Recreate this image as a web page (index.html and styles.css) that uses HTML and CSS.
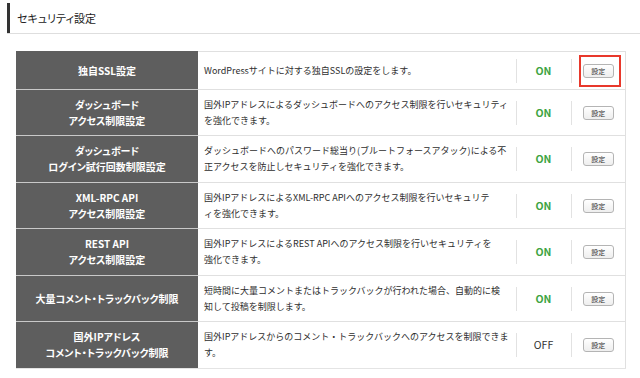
FILE: index.html
```html
<!DOCTYPE html>
<html lang="ja">
<head>
	<meta charset="UTF-8">
	<title>セキュリティ設定</title>
	<link rel="stylesheet" href="styles.css">
</head>
<body>
<main>
	<div class="title-wrap">
		<h1 class="page-title">セキュリティ設定</h1>
	</div>

	<table class="security">
		<colgroup>
			<col class="col-name">
			<col class="col-desc">
			<col class="col-state">
			<col class="col-action">
		</colgroup>
		<tr class="short">
			<th>独自SSL設定</th>
			<td class="desc">WordPressサイトに対する独自SSLの設定をします。</td>
			<td class="state"><div class="sep on">ON</div></td>
			<td class="action"><div class="sep"><span class="btn-wrap"><button type="button" class="btn">設定</button><span class="highlight"></span></span></div></td>
		</tr>
		<tr>
			<th>ダッシュボード<br>アクセス制限設定</th>
			<td class="desc">国外IPアドレスによるダッシュボードへのアクセス制限を行いセキュリティ<br>を強化できます。</td>
			<td class="state"><div class="sep on">ON</div></td>
			<td class="action"><div class="sep"><button type="button" class="btn">設定</button></div></td>
		</tr>
		<tr class="tall">
			<th>ダッシュボード<br>ログイン試行回数制限設定</th>
			<td class="desc">ダッシュボードへのパスワード総当り(ブルートフォースアタック)による不<br>正アクセスを防止しセキュリティを強化できます。</td>
			<td class="state"><div class="sep on">ON</div></td>
			<td class="action"><div class="sep"><button type="button" class="btn">設定</button></div></td>
		</tr>
		<tr>
			<th>XML-RPC API<br>アクセス制限設定</th>
			<td class="desc">国外IPアドレスによるXML-RPC APIへのアクセス制限を行いセキュリテ<br>ィを強化できます。</td>
			<td class="state"><div class="sep on">ON</div></td>
			<td class="action"><div class="sep"><button type="button" class="btn">設定</button></div></td>
		</tr>
		<tr class="tall">
			<th>REST API<br>アクセス制限設定</th>
			<td class="desc">国外IPアドレスによるREST APIへのアクセス制限を行いセキュリティを<br>強化できます。</td>
			<td class="state"><div class="sep on">ON</div></td>
			<td class="action"><div class="sep"><button type="button" class="btn">設定</button></div></td>
		</tr>
		<tr>
			<th>大量コメント・トラックバック制限</th>
			<td class="desc">短時間に大量コメントまたはトラックバックが行われた場合、自動的に検<br>知して投稿を制限します。</td>
			<td class="state"><div class="sep on">ON</div></td>
			<td class="action"><div class="sep"><button type="button" class="btn">設定</button></div></td>
		</tr>
		<tr class="tall">
			<th>国外IPアドレス<br>コメント・トラックバック制限</th>
			<td class="desc">国外IPアドレスからのコメント・トラックバックへのアクセスを制限できま<br>す。</td>
			<td class="state"><div class="sep off">OFF</div></td>
			<td class="action"><div class="sep"><button type="button" class="btn">設定</button></div></td>
		</tr>
	</table>
</main>
</body>
</html>
```

FILE: styles.css
```css
body{
	margin: 0;
	background: #fff;
	color: #333;
	font-family: "Noto Sans CJK JP", "Noto Sans", sans-serif;
}

/* page heading */
.title-wrap{
	margin: 3px 0 0 7px;
	border-bottom: 1px solid #dedede;
}
.page-title{
	margin: 0;
	height: 30px;
	line-height: 30px;
	padding-left: 7px;
	border-left: 3px solid #333;
	font-size: 11px;
	font-weight: normal;
	font-feature-settings: "palt";
	color: #222;
}

/* settings table */
.security{
	margin: 17px 0 0 16px;
	width: 609px;
	border-collapse: collapse;
	table-layout: fixed;
}
.col-name{ width: 181px; }
.col-desc{ width: 318px; }
.col-state{ width: 55px; }
.col-action{ width: 55px; }

.security th,
.security td{
	height: 45px;
	padding: 0;
	vertical-align: middle;
	line-height: 16px;
}
.security tr.short th,
.security tr.short td{
	height: 37px;
}
.security tr.tall th,
.security tr.tall td{
	height: 46px;
}
.security th{
	background: #5e5e5e;
	color: #fff;
	font-size: 10px;
	font-weight: bold;
	font-feature-settings: "palt";
	text-align: center;
	border: 1px solid #5e5e5e;
	border-bottom: 1px solid #c9c9c9;
}
.security td{
	border-top: 1px solid #e0e0e0;
	border-bottom: 1px solid #e0e0e0;
}
.security tr:last-child th,
.security tr:last-child td{
	border-bottom: 1px solid #e4e4e4;
}
.security td.desc{
	padding-left: 6px;
	font-size: 9px;
	white-space: nowrap;
	color: #2e2e2e;
}
.security td.action{
	border-right: 1px solid #e0e0e0;
}

.sep{
	height: 24px;
	border-left: 1px solid #e2e2e2;
	display: flex;
	align-items: center;
	justify-content: center;
}
.on{
	color: #3ea443;
	font-weight: bold;
	font-size: 10.5px;
}
.off{
	color: #333;
	font-size: 10.5px;
}

.btn{
	width: 31px;
	height: 14px;
	padding: 0;
	border: 1px solid #b4b4b4;
	border-radius: 3px;
	background: linear-gradient(#ffffff, #eeeeee);
	font-family: "Noto Sans CJK JP", sans-serif;
	font-size: 7px;
	line-height: 12px;
	color: #333;
	display: block;
}
.btn-wrap{
	position: relative;
	display: block;
}
.highlight{
	position: absolute;
	left: -4px;
	top: -9px;
	width: 42px;
	height: 32px;
	box-sizing: border-box;
	border: 2px solid #e8382b;
}
```
